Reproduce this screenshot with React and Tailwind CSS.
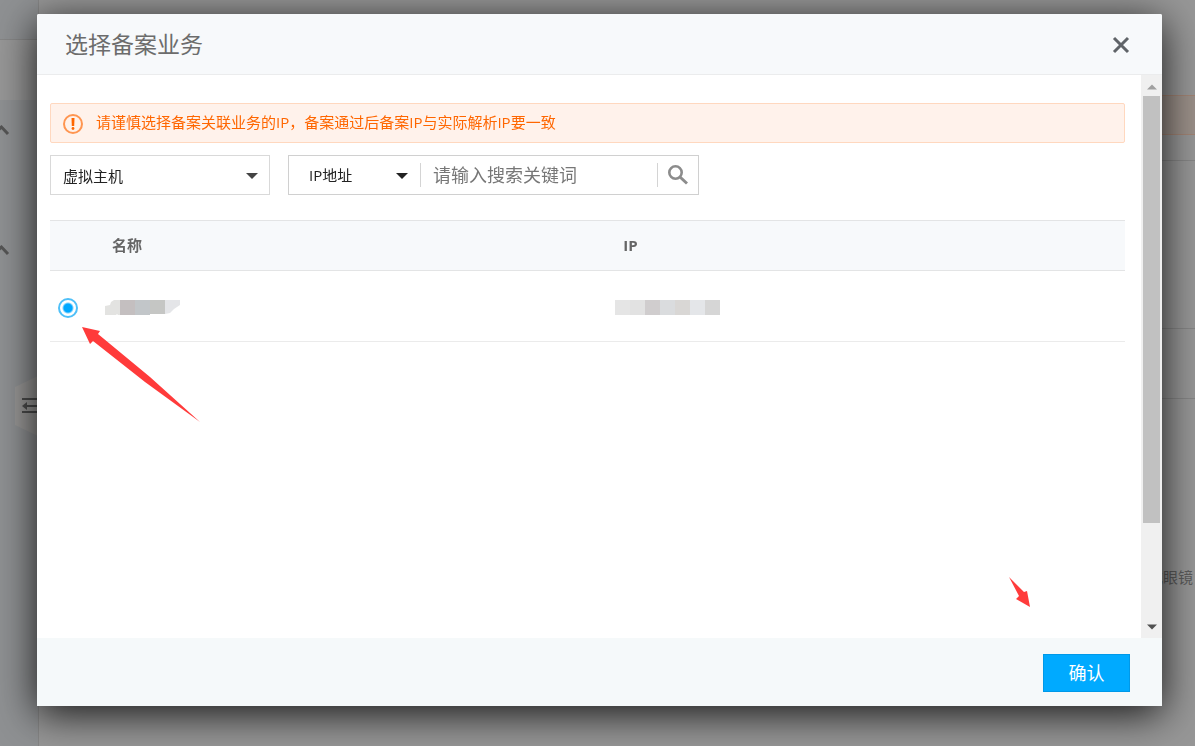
import { useState } from 'react'

const ipBlocks = [
  'bg-[#e5e5e5]',
  'bg-[#e2e2e2]',
  'bg-[#d0cdce]',
  'bg-[#dadcde]',
  'bg-[#d9d7d5]',
  'bg-[#e4e6e9]',
  'bg-[#d6d6d6]',
]

const notice = '请谨慎选择备案关联业务的IP\uFF0C备案通过后备案IP与实际解析IP要一致'

function App() {
  const [open, setOpen] = useState(true)

  return (
    <div className="min-h-screen bg-[#979797] font-['Open_Sans','Noto_Sans_CJK_SC',sans-serif] text-[15px] leading-5">
      <PageBehind />
      {open && <BusinessDialog onClose={() => setOpen(false)} />}
    </div>
  )
}

function PageBehind() {
  return (
    <div className="flex min-h-screen" aria-hidden="true">
      <aside className="w-[39px] shrink-0 border-r border-[#868686] bg-[#8f9193]">
        <div className="h-10 border-b border-[#868686]" />
        <div className="h-[60px] bg-[#979797]" />
        <div className="pt-5">
          <Chevron />
        </div>
        <div className="pt-[100px]">
          <Chevron />
        </div>
        <svg className="mt-[116px] ml-[15px]" width="23" height="60" viewBox="0 0 23 60">
          <path d="M0 11L23 0V60L0 49Z" fill="#999897" />
          <path d="M7 23H23M12 30H23M7 36H23" stroke="#4c4c4c" strokeWidth="2" />
          <path d="M7 30L12 26V34Z" fill="#4c4c4c" />
        </svg>
      </aside>
      <main className="flex flex-1 flex-col">
        <div className="h-[95px]" />
        <div className="h-10 border-y border-[#a28474] bg-[#9b9089]" />
        <div className="h-[26px] border-b border-[#868686]" />
        <div className="h-[168px] border-b border-[#868686]" />
        <div className="h-[70px] border-b border-[#868686]" />
        <p className="pt-[168px] pr-[2px] text-right text-[#5c5c5c]">或眼镜</p>
      </main>
    </div>
  )
}

function Chevron() {
  return (
    <svg width="10" height="12" viewBox="0 0 10 12" fill="none" stroke="#555" strokeWidth="3" className="block h-5">
      <path d="M-4 8L1.5 3L8 10" />
    </svg>
  )
}

function BusinessDialog({ onClose }) {
  return (
    <div className="fixed inset-0 flex pt-[14px] pr-[33px] pb-10 pl-[37px]">
      <section
        role="dialog"
        aria-labelledby="dialog-title"
        className="relative flex min-w-0 flex-1 flex-col rounded-t-xs bg-white shadow-[0_8px_40px_rgba(0,0,0,0.85)]"
      >
        <header className="flex h-[61px] shrink-0 items-center justify-between rounded-t-xs border-b border-[#ebeced] bg-[#f7f9fb] pt-px pr-8 pl-7">
          <h1 id="dialog-title" className="pb-[2px] text-[23px] leading-8 text-[#6c6c6c]">
            选择备案业务
          </h1>
          <button type="button" aria-label="关闭" onClick={onClose} className="text-[#5f6368]">
            <svg width="18" height="18" viewBox="0 0 18 18" stroke="currentColor" strokeWidth="3">
              <path d="M2 2L16 16M16 2L2 16" />
            </svg>
          </button>
        </header>

        <div className="flex min-h-0 flex-1">
          <div className="min-w-0 flex-1 overflow-hidden pt-7 pr-4 pl-[13px]">
            <Notice />
            <Filters />
            <BusinessTable />
          </div>
          <ScrollBar />
        </div>

        <footer className="flex h-[68px] shrink-0 items-start justify-end bg-[#f5f9fa] px-8 pt-4">
          <button
            type="button"
            onClick={onClose}
            className="h-[38px] w-[87px] border border-[#0099e8] bg-[#00aaff] text-lg leading-6 text-white"
          >
            确认
          </button>
        </footer>

        <HintArrows />
      </section>
    </div>
  )
}

function Notice() {
  return (
    <div className="flex h-10 items-center gap-3 rounded-xs border border-[#ffd8bf] bg-[#fff2eb] px-3 text-[#ff6600]">
      <svg width="21" height="21" viewBox="0 0 21 21" className="shrink-0">
        <circle cx="10" cy="11" r="9" fill="none" stroke="#ff9550" strokeWidth="2" />
        <path d="M8.5 5H11.5L11.2 13H8.8Z" fill="#ff6600" />
        <circle cx="10" cy="15.5" r="1.4" fill="#ff6600" />
      </svg>
      <p className="pb-[2px]">{notice}</p>
    </div>
  )
}

function Caret({ className }) {
  return (
    <svg width="12" height="6" viewBox="0 0 12 6" className={className}>
      <path d="M0 0H12L6 6Z" fill="currentColor" />
    </svg>
  )
}

function Filters() {
  return (
    <div className="flex gap-[18px] pt-3 pb-[25px] text-[#222]">
      <div className="relative w-[220px]">
        <select
          aria-label="业务类型"
          className="h-10 w-full appearance-none border border-[#d9d9d9] bg-white px-3 pt-px outline-none"
        >
          <option>虚拟主机</option>
        </select>
        <Caret className="pointer-events-none absolute top-[18px] right-3 text-[#444]" />
      </div>

      <form className="flex h-10 w-[411px] items-center border border-[#d0d0d0]">
        <div className="relative w-[132px] shrink-0 border-r border-[#d4d4d4]">
          <select aria-label="搜索字段" className="h-6 w-full appearance-none bg-white px-5 outline-none">
            <option>IP地址</option>
          </select>
          <Caret className="pointer-events-none absolute top-[10px] right-3" />
        </div>
        <input
          type="text"
          aria-label="搜索关键词"
          placeholder="请输入搜索关键词"
          className="h-6 min-w-0 flex-1 border-r border-[#d4d4d4] pl-3 text-lg leading-6 outline-none placeholder:text-[#777]"
        />
        <button type="submit" aria-label="搜索" className="flex w-10 justify-center text-[#8c8c8c]">
          <svg width="20" height="20" viewBox="0 0 20 20" fill="none" stroke="currentColor" strokeWidth="2.6">
            <circle cx="7.5" cy="7.5" r="6.2" />
            <path d="M12 12L19 18.5" strokeWidth="3" />
          </svg>
        </button>
      </form>
    </div>
  )
}

function BusinessTable() {
  return (
    <table className="w-full table-fixed border-collapse text-left text-[#666]">
      <thead>
        <tr className="h-[50px] border-y border-[#e3e4e5] bg-[#f7f9fb]">
          <th className="w-[55px]" aria-label="选择" />
          <th className="w-[47%] pb-[2px] pl-[7px] font-bold">名称</th>
          <th className="pb-[2px] pl-[13px] font-bold">IP</th>
        </tr>
      </thead>
      <tbody>
        <tr className="h-[71px] border-b border-[#ebebeb]">
          <td className="pt-[3px] pl-2">
            <input
              type="radio"
              name="business"
              aria-label="选择该业务"
              defaultChecked
              className="block size-5 appearance-none rounded-full border-2 border-[#4fc0f8] bg-[radial-gradient(circle,#00a8ff_4px,#fff_6px)]"
            />
          </td>
          <td className="pt-[2px]">
            <MaskedName />
          </td>
          <td className="pt-[2px] pl-[5px]">
            <div className="flex">
              {ipBlocks.map((color) => (
                <span key={color} className={`size-[15px] ${color}`} />
              ))}
            </div>
          </td>
        </tr>
      </tbody>
    </table>
  )
}

function MaskedName() {
  return (
    <svg width="75" height="15" viewBox="0 0 75 15" className="block">
      <path d="M0 6L5 5L6 2L9 0H15V15H13L12 14L11 15H0Z" fill="#e3e3e1" />
      <path d="M15 0H30V15H15Z" fill="#c4bfc0" />
      <path d="M30 0H45V15H30Z" fill="#c2c6c9" />
      <path d="M45 0H60V14H45Z" fill="#c5c6c4" />
      <path d="M60 0H75V5L69 9L65 13L60 14Z" fill="#e4e5e8" />
    </svg>
  )
}

function ScrollBar() {
  return (
    <div className="flex w-[21px] shrink-0 flex-col bg-[#f0f0f0]" aria-hidden="true">
      <div className="flex h-[21px] shrink-0 items-center justify-center pt-[2px] text-[#a0a0a0]">
        <Caret className="w-[10px] rotate-180" />
      </div>
      <div className="flex-1 px-[2px]">
        <div className="h-[82%] bg-[#c1c1c1]" />
      </div>
      <div className="flex h-[21px] shrink-0 items-center justify-center pb-[2px] text-[#505050]">
        <Caret className="w-[10px]" />
      </div>
    </div>
  )
}

// red pointers drawn over the dialog: one at the radio, one at the confirm button
function HintArrows() {
  return (
    <>
      <svg
        className="pointer-events-none absolute top-[312px] left-[44px]"
        width="120"
        height="98"
        viewBox="0 0 120 98"
        fill="#ff3b3b"
      >
        <path d="M1 1L19 5L17 8L69 51L119 96L64 56L12 15L9 18Z" />
      </svg>
      <svg
        className="pointer-events-none absolute right-[131px] bottom-[98px]"
        width="23"
        height="32"
        viewBox="0 0 23 32"
        fill="#ff3b3b"
      >
        <path d="M1 1L16 16L19 15L22 31L8 23L11 20Z" />
      </svg>
    </>
  )
}

export default App
